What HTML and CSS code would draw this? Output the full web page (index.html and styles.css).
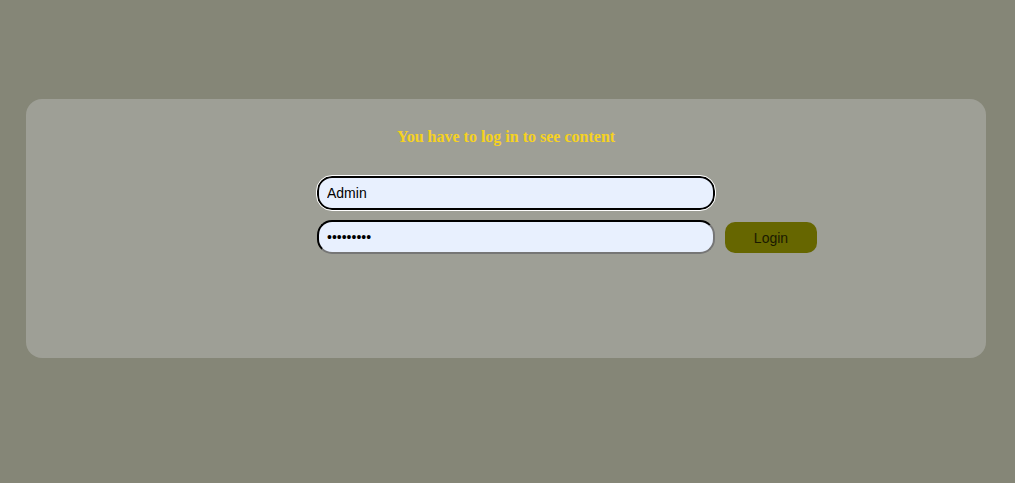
FILE: index.html
```html
<!DOCTYPE html>
<html>
<head>
<meta charset="utf-8">
<link rel="stylesheet" href="styles.css">
</head>
<body>
<div class="card">
  <h3 class="title">You have to log in to see content</h3>
  <form class="form">
    <div class="row">
      <input class="field focused" type="text" value="Admin">
    </div>
    <div class="row">
      <input class="field" type="password" value="123456789">
      <button class="btn" type="button">Login</button>
    </div>
  </form>
</div>
</body>
</html>
```
FILE: styles.css
```css
html, body {
  margin: 0;
  padding: 0;
}
body {
  background: #858677;
  height: 483px;
  padding-top: 99px;
  box-sizing: border-box;
  font-family: "Liberation Sans", Arial, sans-serif;
}
.card {
  margin: 0 29px 0 26px;
  height: 259px;
  background: #9e9f96;
  border-radius: 16px;
  box-sizing: border-box;
  padding-top: 28px;
}
.title {
  margin: 0;
  text-align: center;
  font-family: "Liberation Serif", "Times New Roman", serif;
  font-weight: bold;
  font-size: 16px;
  color: #f6d21f;
  line-height: 20px;
}
.form {
  margin: 29px 0 0 291px;
  display: flex;
  flex-direction: column;
  gap: 10px;
}
.row {
  display: flex;
  align-items: center;
  gap: 10px;
}
.field {
  width: 398px;
  height: 34px;
  box-sizing: border-box;
  border-radius: 15px;
  border: 2px inset #767676;
  border-top-color: #1a1a1a;
  border-left-color: #1a1a1a;
  background: #e8f0fe;
  padding: 0 8px;
  font-family: "Liberation Sans", Arial, sans-serif;
  font-size: 14px;
  color: #000;
}
.field.focused {
  border: 2px solid #000;
  outline: 1px solid #fff;
  outline-offset: 0;
}
.btn {
  width: 92px;
  height: 31px;
  margin-top: 1px;
  border: none;
  border-radius: 10px;
  background: #666600;
  color: #1a1a00;
  font-family: "Liberation Sans", Arial, sans-serif;
  font-size: 14px;
  padding: 0;
}
```
